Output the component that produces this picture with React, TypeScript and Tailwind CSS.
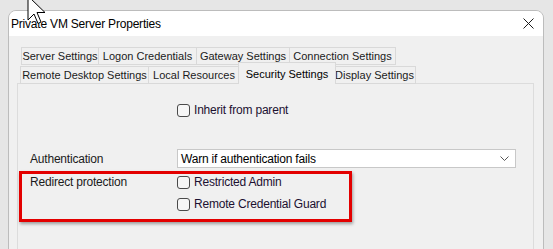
import * as React from "react";

const font = { fontFamily: '"Liberation Sans", Arial, sans-serif' };

const row1 = [
  { label: "Server Settings", w: 78 },
  { label: "Logon Credentials", w: 99 },
  { label: "Gateway Settings", w: 94 },
  { label: "Connection Settings", w: 107 },
];

const row2 = [
  { label: "Remote Desktop Settings", w: 129 },
  { label: "Local Resources", w: 92 },
  { label: "Security Settings", w: 94, active: true },
  { label: "Display Settings", w: 83 },
];

function Tab({ label, w, active }: { label: string; w: number; active?: boolean }) {
  if (active) {
    return (
      <div
        style={{ width: w + 4 }}
        className="relative z-10 -mx-[2px] -mt-[2px] flex h-[22px] shrink-0 items-start justify-center whitespace-nowrap border border-b-0 border-[#d9d9d9] bg-[#f0f0f0] pt-[3px] text-[11px] text-black"
      >
        {label}
      </div>
    );
  }
  return (
    <div
      style={{ width: w }}
      className="-ml-px flex h-[18px] shrink-0 items-center justify-center whitespace-nowrap border border-[#d9d9d9] bg-[#f0f0f0] text-[11px] text-[#1b1b1b] first:ml-0"
    >
      {label}
    </div>
  );
}

function Check({ label }: { label: string }) {
  return (
    <div className="flex h-[20px] items-center gap-[4px]">
      <span className="h-[13px] w-[13px] rounded-[3px] border border-[#4a4a4a] bg-[#f6f6f6]" />
      <span className="whitespace-nowrap text-[12px] tracking-[-0.2px] text-[#1c1030]">{label}</span>
    </div>
  );
}

export default function App() {
  return (
    <div
      style={font}
      className="relative h-[249px] w-[553px] overflow-hidden bg-[#e6e6e6]"
    >
      <div className="ml-[8px] mt-[10px] h-[260px] w-[536px] overflow-hidden rounded-t-[8px] border border-[#bcbcbc] bg-[#f0f0f0]">
        {/* title bar */}
        <div className="flex h-[25px] items-center justify-between bg-white pl-[2px] pr-[9px]">
          <span className="text-[12px] tracking-[-0.2px] text-black">Private VM Server Properties</span>
          <svg width="11" height="11" viewBox="0 0 11 11">
            <path d="M0.5 0.5L10.5 10.5M10.5 0.5L0.5 10.5" stroke="#1a1a1a" strokeWidth="1" />
          </svg>
        </div>

        {/* tabs */}
        <div className="pl-[8px] pt-[11px]">
          <div className="flex pl-[4px]">
            {row1.map((t) => (
              <Tab key={t.label} label={t.label} w={t.w} />
            ))}
          </div>
          <div className="relative z-10 -mt-px flex h-[20px] items-end pl-[3px] pt-[2px]">
            {row2.map((t) => (
              <Tab key={t.label} label={t.label} w={t.w} active={t.active} />
            ))}
          </div>

          {/* panel */}
          <div className="-mt-px h-[200px] w-[517px] border border-[#dcdcdc] bg-[#f0f0f0]">
            <div className="ml-[159px] mt-[16px]">
              <Check label="Inherit from parent" />
            </div>

            <div className="mt-[29px] flex items-center">
              <span className="w-[159px] pl-[12px] text-[12px] tracking-[-0.2px] text-[#1b1b1b]">Authentication</span>
              <div className="flex h-[19px] w-[339px] items-center justify-between border border-[#c8c8c8] bg-white pl-[3px] pr-[6px]">
                <span className="text-[12px] tracking-[-0.2px] text-black">Warn if authentication fails</span>
                <svg width="9" height="6" viewBox="0 0 9 6">
                  <path d="M0.5 0.5L4.5 4.5L8.5 0.5" fill="none" stroke="#555" strokeWidth="1" />
                </svg>
              </div>
            </div>

            <div className="mt-[4px] flex">
              <span className="flex h-[20px] w-[159px] items-center whitespace-nowrap pl-[12px] text-[12px] tracking-[-0.2px] text-[#1b1b1b]">
                Redirect protection
              </span>
              <div className="flex flex-col gap-[2px]">
                <Check label="Restricted Admin" />
                <Check label="Remote Credential Guard" />
              </div>
            </div>
          </div>
        </div>
      </div>

      {/* annotation box */}
      <div className="absolute left-[19px] top-[171px] h-[51px] w-[333px] border-[3px] border-[#e30000] shadow-[1px_2px_3px_rgba(0,0,0,0.35)]" />

      {/* mouse pointer */}
      <svg className="absolute left-[27px] top-[-5px]" width="20" height="32" viewBox="0 0 20 32">
        <path
          d="M1 1L1 25L7 19L11 28.5L14 27L10 17.5L18 17.5Z"
          fill="white"
          stroke="black"
          strokeWidth="1"
          strokeLinejoin="round"
        />
      </svg>
    </div>
  );
}
